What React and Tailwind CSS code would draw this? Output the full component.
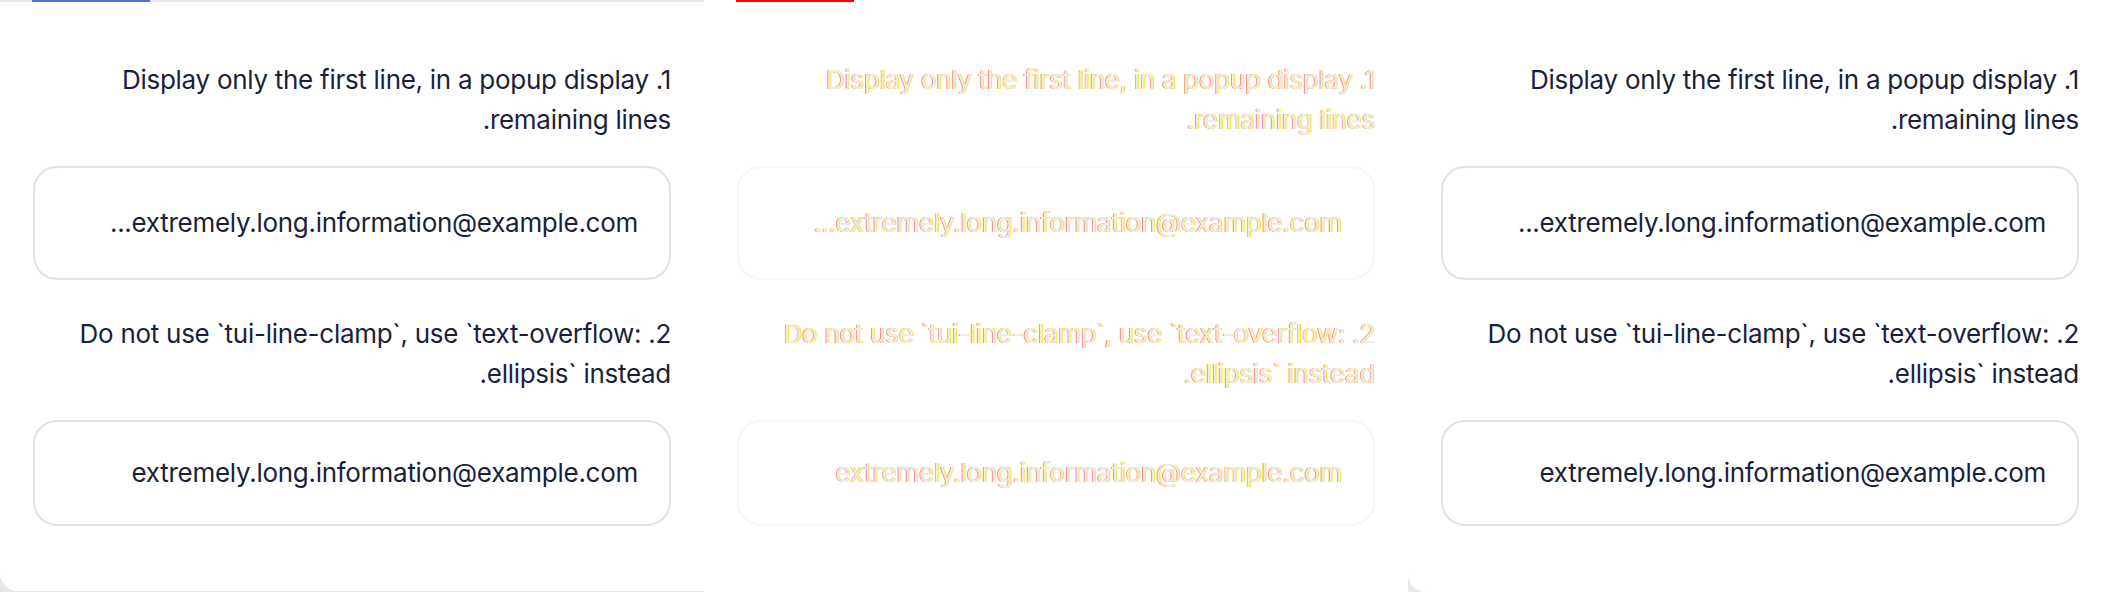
export default function App() {
  return (
    <div className="flex w-[2112px] h-[592px] bg-white overflow-hidden font-['Inter','Noto_Sans',sans-serif]">
      <Panel mode="left" />
      <Panel mode="diff" />
      <Panel mode="right" />
    </div>
  );
}

function Panel({ mode }) {
  const diff = mode === "diff";
  const textCls = diff
    ? "text-[#ececec] [text-shadow:0.8px_0_0_#ffee00,-0.7px_0.4px_0_rgba(255,30,0,0.75)]"
    : "text-[#1b1f3b]";
  const boxBorder = diff ? "border-[#f7f7f7]" : "border-[#e2e2e2]";
  const outerBg =
    mode === "left" ? "bg-[#e6e6e6]" : mode === "right" ? "bg-[#e9e9e9]" : "bg-white";
  const innerCls =
    mode === "left"
      ? "h-[591px] rounded-bl-[18px] border-t-2 border-[#e6e6e6]"
      : mode === "right"
      ? "h-[592px] rounded-bl-[18px] border-t-2 border-white"
      : "h-[592px] border-t-2 border-white";
  const txt = "text-[26px] leading-[40px] tracking-[-0.28px]";
  return (
    <div className={`relative w-[704px] h-[592px] shrink-0 ${outerBg}`}>
      <div className={`bg-white flex flex-col px-[33px] pt-[58px] ${innerCls}`}>
        <p className={`text-right ${txt} ${textCls}`}>
          Display only the first line, in a popup display .1
          <br />
          .remaining lines
        </p>
        <div
          className={`mt-[26px] h-[114px] shrink-0 rounded-[24px] border-2 ${boxBorder} flex items-center justify-end pr-[31px]`}
        >
          <span className={`${txt} ${textCls}`}>...extremely.long.information@example.com</span>
        </div>
        <p className={`mt-[34px] text-right ${txt} ${textCls}`}>
          Do not use `tui-line-clamp`, use `text-overflow: .2
          <br />
          .ellipsis` instead
        </p>
        <div
          className={`mt-[26px] h-[106px] shrink-0 rounded-[24px] border-2 ${boxBorder} flex items-center justify-end pr-[31px]`}
        >
          <span className={`${txt} ${textCls}`}>extremely.long.information@example.com</span>
        </div>
      </div>
      {mode === "left" && (
        <div className="absolute top-0 left-[32px] w-[118px] h-[2px] bg-[#526ed3]" />
      )}
      {diff && <div className="absolute top-0 left-[32px] w-[118px] h-[2px] bg-[#ff0000]" />}
    </div>
  );
}
